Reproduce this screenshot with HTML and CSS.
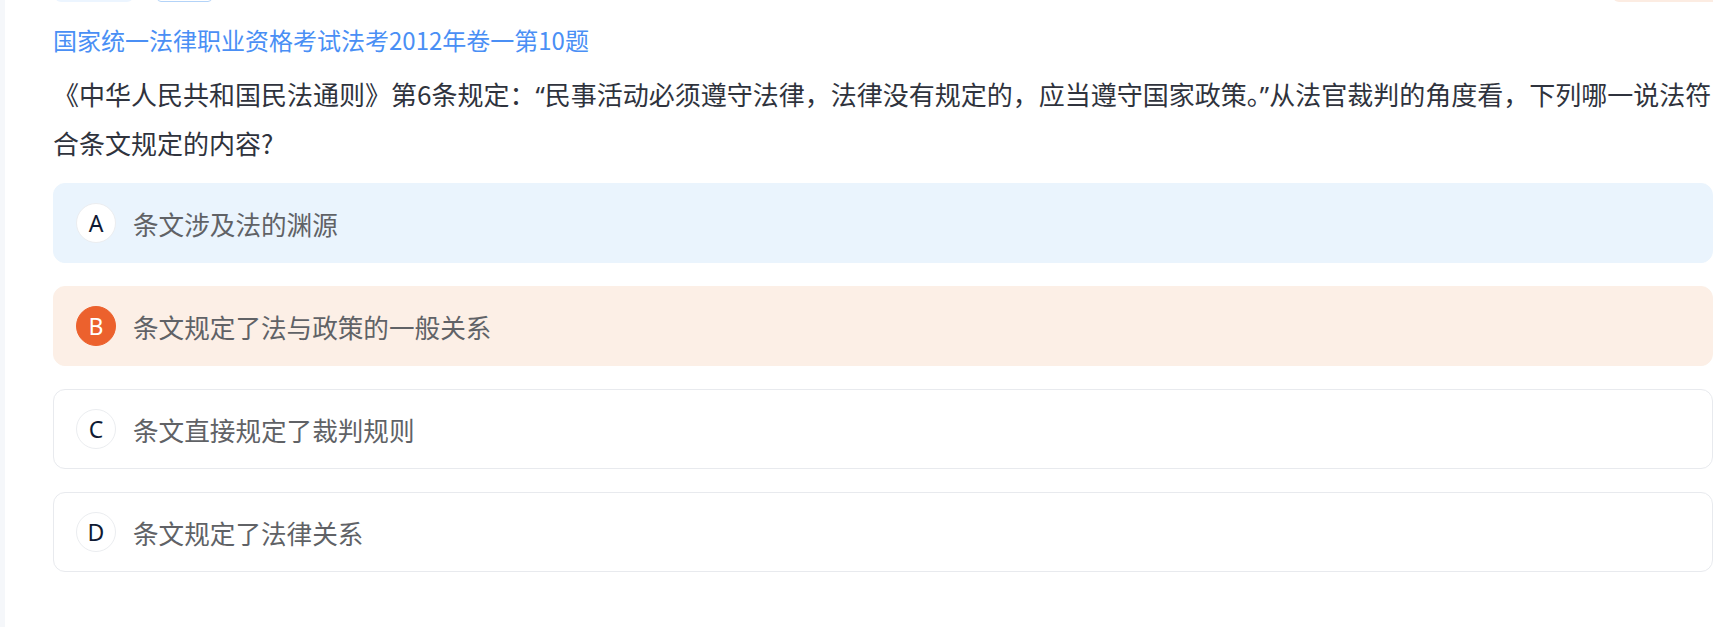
FILE: index.html
```html
<!DOCTYPE html>
<html lang="zh-CN">
<head>
<meta charset="utf-8">
<title>题目</title>
<link rel="stylesheet" href="styles.css">
</head>
<body>
<div class="page">
  <div class="toolbar">
    <span class="tag tag-blue"></span>
    <span class="tag tag-outline"></span>
    <span class="tag tag-peach"></span>
  </div>
  <div class="source">国家统一法律职业资格考试法考2012年卷一第10题</div>
  <div class="stem">《中华人民共和国民法通则》第6条规定：<span class="q">“</span>民事活动必须遵守法律，法律没有规定的，应当遵守国家政策。<span class="q">”</span>从法官裁判的角度看，下列哪一说法符合条文规定的内容?</div>
  <div class="options">
    <div class="option option-hover">
      <span class="letter">A</span>
      <span class="text">条文涉及法的渊源</span>
    </div>
    <div class="option option-selected">
      <span class="letter">B</span>
      <span class="text">条文规定了法与政策的一般关系</span>
    </div>
    <div class="option">
      <span class="letter">C</span>
      <span class="text">条文直接规定了裁判规则</span>
    </div>
    <div class="option">
      <span class="letter">D</span>
      <span class="text">条文规定了法律关系</span>
    </div>
  </div>
</div>
</body>
</html>
```

FILE: styles.css
```css
html, body {
  margin: 0;
  padding: 0;
}
body {
  background: #f5f7fa;
  font-family: "Noto Sans CJK SC", "Noto Sans", sans-serif;
  overflow: hidden;
}
.page {
  display: flow-root;
  margin-left: 5px;
  background: #ffffff;
  min-height: 627px;
  padding-left: 48px;
  box-sizing: border-box;
}
.toolbar {
  display: flex;
  height: 32px;
  margin-top: -30px;
}
.tag {
  display: block;
  height: 32px;
  box-sizing: border-box;
}
.tag-blue {
  margin-left: 2px;
  width: 78px;
  background: #ecf5ff;
  border-radius: 6px;
}
.tag-outline {
  margin-left: 24px;
  width: 55px;
  border: 1px solid #b3d3f8;
  border-radius: 4px;
  background: #fff;
}
.tag-peach {
  margin-left: auto;
  width: 100px;
  background: #fcece2;
  border-radius: 6px 0 0 6px;
}
.source {
  margin-top: 20px;
  font-size: 24px;
  line-height: 36px;
  color: #4a8ff5;
}
.stem {
  margin-top: 12px;
  font-size: 26px;
  line-height: 48px;
  color: #2f333d;
}
.q {
  font-family: "Noto Sans", sans-serif;
}
.options {
  margin-top: 16px;
  display: flex;
  flex-direction: column;
  gap: 23px;
}
.option {
  height: 80px;
  box-sizing: border-box;
  border: 1px solid #e8eaee;
  border-radius: 12px;
  background: #fff;
  display: flex;
  align-items: center;
  padding-left: 22px;
}
.option-hover {
  background: #eaf4fd;
  border-color: #eaf4fd;
}
.option-selected {
  background: #fcefe6;
  border-color: #fcefe6;
}
.letter {
  width: 40px;
  height: 40px;
  box-sizing: border-box;
  border-radius: 50%;
  border: 1px solid #ebedf0;
  background: #fff;
  display: flex;
  align-items: center;
  justify-content: center;
  font-family: "Noto Sans", "Noto Sans CJK SC", sans-serif;
  font-size: 23px;
  color: #0f1a33;
  flex: none;
}
.option-selected .letter {
  background: #ec612d;
  border-color: #ec612d;
  color: #fff;
}
.text {
  margin-left: 17px;
  font-size: 25.6px;
  color: #606266;
}
```
